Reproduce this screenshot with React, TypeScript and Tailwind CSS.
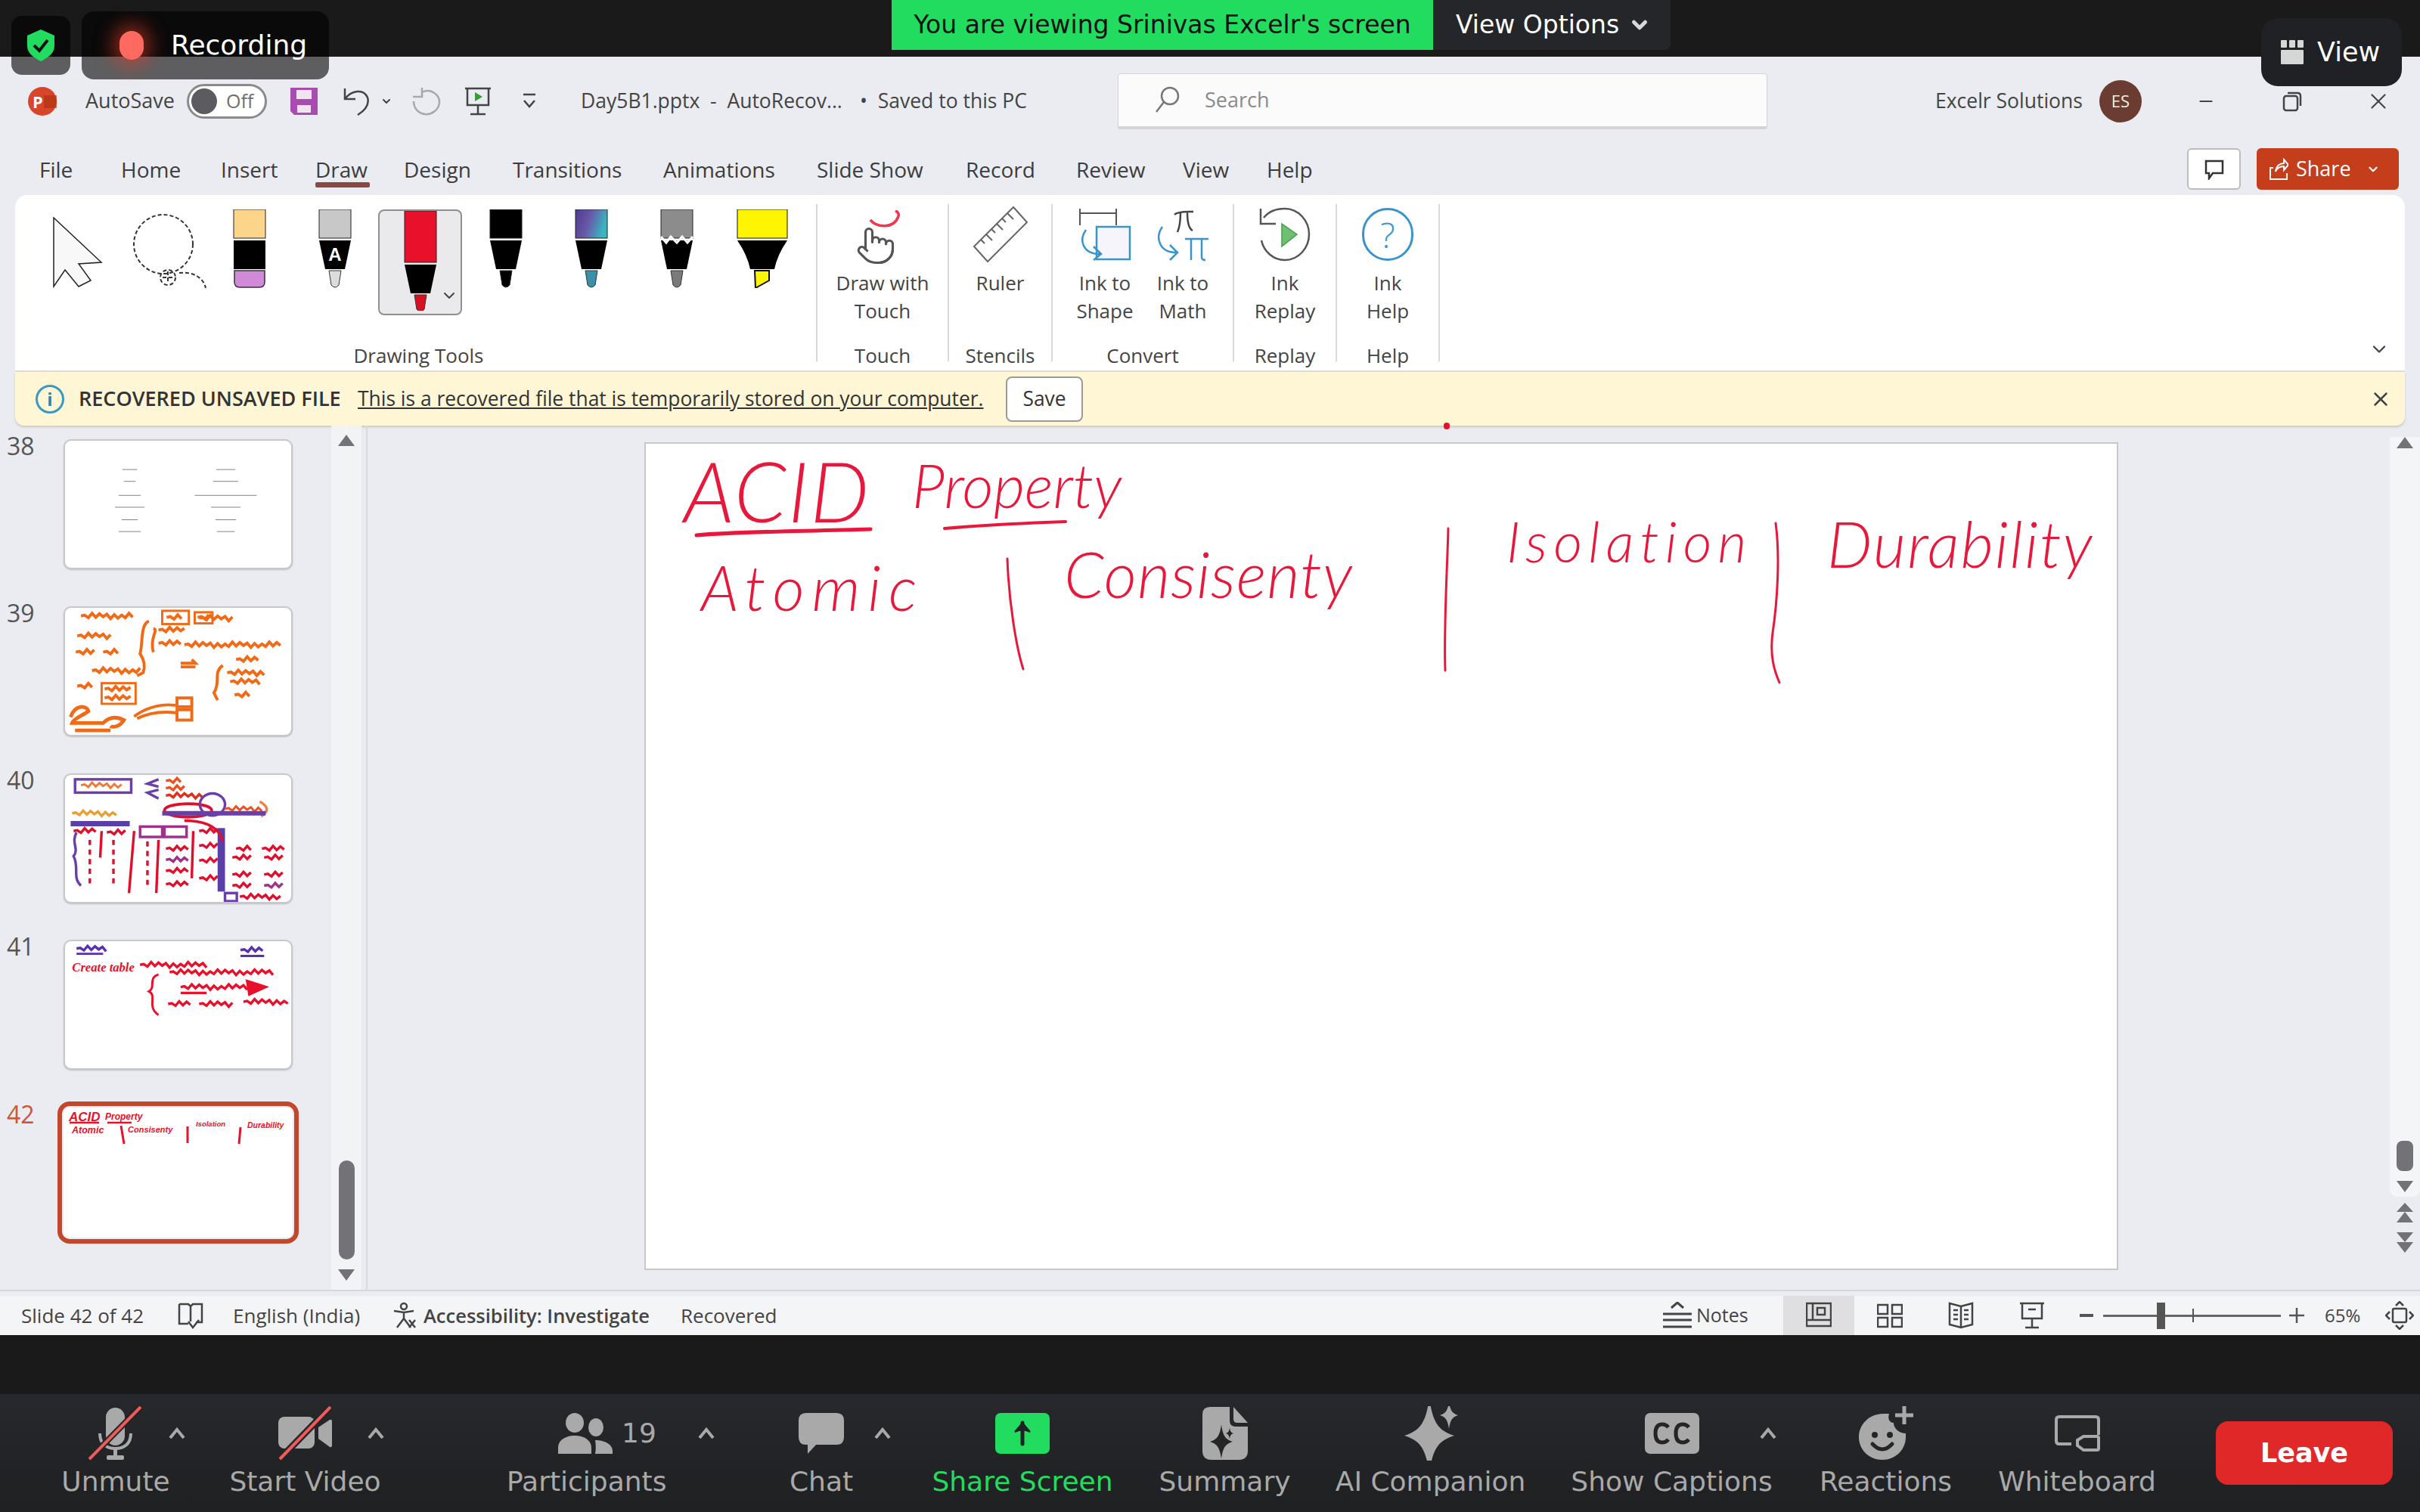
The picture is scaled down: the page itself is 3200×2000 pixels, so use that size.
import React from 'react';
import { Pointer, X, Minus, ChevronDown } from 'lucide-react';

const GRAY = '#a9a9a9';

const Caret = ({ className = '' }: { className?: string }) => (
  <svg width="24" height="16" viewBox="0 0 24 16" className={`shrink-0 ${className}`}>
    <path d="M3 14 L12 3 L21 14" fill="none" stroke={GRAY} strokeWidth="4" />
  </svg>
);

const MicIcon = () => (
  <svg width="72" height="72" viewBox="0 0 72 72">
    <rect x="23" y="2" width="25" height="50" rx="12.5" fill={GRAY} />
    <path d="M15 36 C15 50 24 56 35.5 56 S56 50 56 36" fill="none" stroke={GRAY} strokeWidth="4" />
    <rect x="33" y="56" width="5" height="10" fill={GRAY} />
    <rect x="24" y="65" width="23" height="6" rx="2" fill={GRAY} />
    <path d="M1 70 L69 1" stroke="#232527" strokeWidth="8" />
    <path d="M1 70 L69 1" stroke="#f05a5a" strokeWidth="4" />
  </svg>
);

const VideoIcon = () => (
  <svg width="72" height="72" viewBox="0 0 72 72">
    <rect x="0" y="14" width="48" height="42" rx="8" fill={GRAY} />
    <path d="M53 28 L68 18 Q71 17 71 20 V52 Q71 55 68 54 L53 43 Z" fill={GRAY} />
    <path d="M2 70 L69 1" stroke="#232527" strokeWidth="9" />
    <path d="M2 70 L69 1" stroke="#f05a5a" strokeWidth="4" />
  </svg>
);

const PeopleIcon = () => (
  <svg width="72" height="54" viewBox="0 0 72 54" className="shrink-0">
    <ellipse cx="22" cy="13" rx="12" ry="13" fill={GRAY} />
    <ellipse cx="50" cy="19" rx="10" ry="12" fill={GRAY} />
    <path d="M0 54 V46 C0 36 10 30 22 30 S44 36 44 46 V54 Z" fill={GRAY} />
    <path d="M49 36 C62 36 72 42 72 50 V54 H49 C50 48 50 42 49 36 Z" fill={GRAY} />
  </svg>
);

const ChatIcon = () => (
  <svg width="60" height="54" viewBox="0 0 60 54">
    <path d="M10 0 H50 Q60 0 60 10 V32 Q60 42 50 42 H23 L12 54 V42 H10 Q0 42 0 32 V10 Q0 0 10 0 Z" fill={GRAY} />
  </svg>
);

const ShareIcon = () => (
  <svg width="72" height="54" viewBox="0 0 72 54">
    <rect width="72" height="54" rx="7" fill="#22dc60" />
    <path d="M36 13 V41" stroke="#1f2124" strokeWidth="5" strokeLinecap="round" />
    <path d="M26 25 L36 13 L46 25 Q36 20 26 25 Z" fill="#1f2124" stroke="#1f2124" strokeWidth="2" />
  </svg>
);

const Sparkle = ({ cx, cy, r, fill }: { cx: number; cy: number; r: number; fill: string }) => (
  <path
    d={`M${cx} ${cy - r * 1.5} C${cx + r * 0.15} ${cy - r * 0.45} ${cx + r * 0.4} ${cy - r * 0.2} ${cx + r} ${cy} C${cx + r * 0.4} ${cy + r * 0.2} ${cx + r * 0.15} ${cy + r * 0.45} ${cx} ${cy + r * 1.5} C${cx - r * 0.15} ${cy + r * 0.45} ${cx - r * 0.4} ${cy + r * 0.2} ${cx - r} ${cy} C${cx - r * 0.4} ${cy - r * 0.2} ${cx - r * 0.15} ${cy - r * 0.45} ${cx} ${cy - r * 1.5} Z`}
    fill={fill}
  />
);

const SummaryIcon = () => (
  <svg width="60" height="70" viewBox="0 0 60 70">
    <path d="M10 0 H36 V18 Q36 26 44 26 H60 V58 Q60 70 48 70 H12 Q0 70 0 58 V10 Q0 0 10 0 Z" fill={GRAY} />
    <path d="M41 0 L60 21 H46 Q41 21 41 16 Z" fill={GRAY} />
    <Sparkle cx={25} cy={46} r={15} fill="#232527" />
    <Sparkle cx={36} cy={35} r={5} fill="#232527" />
  </svg>
);

const AiIcon = () => (
  <svg width="72" height="72" viewBox="0 0 72 72">
    <Sparkle cx={34} cy={39} r={33} fill={GRAY} />
    <Sparkle cx={60} cy={12} r={12} fill={GRAY} />
  </svg>
);

const CcIcon = () => (
  <svg width="72" height="54" viewBox="0 0 72 54">
    <rect width="72" height="54" rx="7" fill={GRAY} />
    <path d="M31 19 Q28 15 23 15 Q14 15 14 27 Q14 39 23 39 Q28 39 31 35" fill="none" stroke="#232527" strokeWidth="5" />
    <path d="M58 19 Q55 15 50 15 Q41 15 41 27 Q41 39 50 39 Q55 39 58 35" fill="none" stroke="#232527" strokeWidth="5" />
  </svg>
);

const ReactionIcon = () => (
  <svg width="72" height="72" viewBox="0 0 72 72">
    <path d="M32 10 C14 10 0 24 0 41 C0 58 14 71 31 71 C48 71 62 58 62 41 L62 36 C54 36 46 30 46 22 C40 22 38 16 40 10 Z" fill={GRAY} />
    <circle cx="21" cy="38" r="4" fill="#232527" />
    <circle cx="41" cy="38" r="4" fill="#232527" />
    <path d="M18 50 Q31 64 44 50" fill="none" stroke="#232527" strokeWidth="5" strokeLinecap="round" />
    <path d="M60 0 V24 M48 12 H72" stroke={GRAY} strokeWidth="5" />
  </svg>
);

const WhiteboardIcon = () => (
  <svg width="60" height="48" viewBox="0 0 60 48">
    <path d="M22 38 H6 Q2 38 2 34 V6 Q2 2 6 2 H54 Q58 2 58 6 V26" fill="none" stroke={GRAY} strokeWidth="4" />
    <path d="M30 33 L38 28 H56 Q58 28 58 30 V44 Q58 46 56 46 H38 L30 40 Z" fill="none" stroke={GRAY} strokeWidth="4" />
  </svg>
);

const ZoomItem = ({ label, icon, caret, className = '', green = false }: { label: string; icon: React.ReactNode; caret?: string; className?: string; green?: boolean }) => (
  <div className={`flex flex-col items-center ${className}`}>
    <div className="grid grid-cols-[minmax(0,1fr)_auto_minmax(0,1fr)] items-center w-full h-[72px]">
      <div />
      <div className="flex items-center justify-center">{icon}</div>
      {caret ? (
        <div className="w-0 flex items-center">
          <Caret className={caret} />
        </div>
      ) : (
        <div />
      )}
    </div>
    <span className={`mt-[8px] text-[36px] leading-[40px] whitespace-nowrap ${green ? 'text-[#22dc60]' : 'text-[#a9a9a9]'}`}>{label}</span>
  </div>
);

const Pen = ({ body, tip, kind = 'pen', long = false }: { body: string; tip: string; kind?: 'pen' | 'eraser' | 'pencil' | 'sketch'; long?: boolean }) => {
  const top = long ? 68 : 38;
  return (
    <svg width="44" height={long ? 132 : 104} viewBox={`0 0 44 ${long ? 132 : 104}`}>
      <rect x="1" y="0" width="42" height={top} fill={body} stroke="#222" strokeWidth="1" />
      {kind === 'eraser' ? (
        <>
          <rect x="1" y={top + 3} width="42" height="38" fill="#000" />
          <path d={`M2 ${top + 43} H42 V96 Q42 103 35 103 H9 Q2 103 2 96 Z`} fill={tip} stroke="#333" strokeWidth="1.5" />
        </>
      ) : (
        <>
          <path d={`M1 ${top + 3} H43 L35 ${top + 41} H9 Z`} fill="#000" />
          <path d={`M14 ${top + 43} H30 L27 ${top + 62} Q22 ${top + 68} 17 ${top + 62} Z`} fill={tip} stroke="#333" strokeWidth="1" />
        </>
      )}
      {kind === 'pencil' && (
        <text x="22" y="68" textAnchor="middle" fontSize="24" fontWeight="700" fill="#fff" fontFamily="Liberation Sans, sans-serif">A</text>
      )}
      {kind === 'sketch' && <path d="M1 36 L8 44 L14 36 L22 44 L29 36 L36 44 L43 36" fill="none" stroke="#fff" strokeWidth="3" />}
    </svg>
  );
};

const Highlighter = () => (
  <svg width="68" height="104" viewBox="0 0 68 104">
    <rect x="1" y="0" width="66" height="38" fill="#fff500" stroke="#111" strokeWidth="1" />
    <path d="M1 41 H67 Q54 60 50 79 H18 Q14 60 1 41 Z" fill="#000" />
    <path d="M24 81 H43 V94 L25 104 Z" fill="#fff500" stroke="#111" strokeWidth="2" />
  </svg>
);

const GalaxyDefs = () => (
  <svg width="0" height="0" className="absolute">
    <defs>
      <linearGradient id="galaxy" x1="0" y1="0" x2="1" y2="0.3">
        <stop offset="0" stopColor="#4b3a8f" />
        <stop offset="0.5" stopColor="#6a58a8" />
        <stop offset="1" stopColor="#37b6c0" />
      </linearGradient>
    </defs>
  </svg>
);

const RibbonBtn = ({ lines, icon, className = '' }: { lines: string[]; icon: React.ReactNode; className?: string }) => (
  <div className={`flex flex-col items-center ${className}`}>
    <div className="h-[72px] mt-[4px] flex items-center justify-center">{icon}</div>
    <div className="mt-[10px] text-[26px] leading-[37px] text-center text-[#444] whitespace-nowrap">
      {lines.map((l) => (
        <div key={l}>{l}</div>
      ))}
    </div>
  </div>
);

const Group = ({ label, className, labelClass = '', children }: { label: string; className: string; labelClass?: string; children: React.ReactNode }) => (
  <div className={`flex flex-col h-[208px] border-r-2 border-[#d8d8d8] ${className}`}>
    <div className="flex-1 flex">{children}</div>
    <div className={`text-[26px] leading-[16px] text-center text-[#444] whitespace-nowrap ${labelClass}`}>{label}</div>
  </div>
);

const ARrow = ({ up = false, className = '' }: { up?: boolean; className?: string }) => (
  <svg width="22" height="15" viewBox="0 0 22 15" className={className}>
    <path d={up ? 'M11 0 L22 15 H0 Z' : 'M0 0 H22 L11 15 Z'} fill="#737277" />
  </svg>
);

// wobbly stroke standing in for illegible marks on the small slide previews
const wave = (x1: number, x2: number, y: number, amp = 2.6, step = 5) => {
  let d = `M${x1} ${y}`;
  let i = 0;
  for (let x = x1 + step; x <= x2; x += step) {
    const a = amp * (0.4 + ((i * 7) % 5) / 4);
    d += ` L${x} ${y + (i % 2 ? a : -a)}`;
    i++;
  }
  return d;
};

const Thumb38 = () => {
  const rows: [number, number, number][] = [
    [39, 20, 26],
    [55, 16, 34],
    [74, 30, 84],
    [90, 40, 40],
    [107, 22, 28],
    [123, 30, 24],
  ];
  return (
    <svg viewBox="0 0 303 172" className="w-full h-full" stroke="#808080" strokeWidth="1">
      {rows.map(([y, l, r]) => (
        <g key={y}>
          <path d={`M${86 - l / 2} ${y} h${l}`} />
          <path d={`M${216 - r / 2} ${y} h${r}`} />
        </g>
      ))}
    </svg>
  );
};

const Thumb39 = () => {
  const waves: [number, number, number][] = [
    [20, 90, 11], [15, 64, 38], [50, 70, 60], [35, 100, 85], [125, 160, 30], [125, 155, 48], [160, 290, 50], [230, 262, 70], [218, 268, 88], [222, 262, 100], [228, 250, 118], [13, 40, 60], [15, 38, 106], [180, 225, 14], [136, 160, 13], [178, 196, 13], [52, 90, 110], [52, 90, 122],
  ];
  return (
    <svg viewBox="0 0 303 172" className="w-full h-full blur-[0.6px]" fill="none" stroke="#f26a16" strokeWidth="4">
      {waves.map(([a, b, y]) => (
        <path key={`${a}-${y}`} d={wave(a, b, y)} />
      ))}
      <rect x="130" y="4" width="36" height="18" strokeWidth="3" />
      <rect x="174" y="6" width="24" height="15" strokeWidth="3" />
      <rect x="48" y="102" width="46" height="28" strokeWidth="3" />
      <path d="M112 18 C100 22 104 50 100 62 C104 68 108 78 104 88 L96 92" />
      <path d="M118 28 C126 30 112 40 118 60" />
      <path d="M212 78 C198 88 210 100 200 115 L205 125" />
      <path d="M92 147 C110 134 130 130 148 132 M96 150 C112 142 130 140 148 142" />
      <rect x="150" y="122" width="20" height="12" />
      <rect x="150" y="138" width="20" height="14" />
      <path d="M6 148 C12 130 28 132 30 140 C22 146 10 150 8 156 H50 C60 146 70 148 78 152 C72 162 62 162 60 160" strokeWidth="5" />
      <path d="M12 166 H60" strokeWidth="5" />
      <path d="M155 75 H175 L170 70 M155 80 H175" />
    </svg>
  );
};

const Thumb40 = () => (
  <svg viewBox="0 0 303 172" className="w-full h-full blur-[0.6px]" fill="none" strokeWidth="3.5">
    <rect x="12" y="6" width="76" height="18" stroke="#6b3fa8" strokeWidth="3.5" />
    <path d={wave(20, 78, 14)} stroke="#f07a30" strokeWidth="3" />
    <path d="M125 6 L110 12 L125 16 M125 20 L110 24 L125 32" stroke="#6b3fa8" />
    <path d={wave(135, 155, 8)} stroke="#f05020" />
    <path d={wave(135, 160, 18)} stroke="#f05020" />
    <path d={wave(135, 185, 28)} stroke="#e0301c" />
    <ellipse cx="165" cy="48" rx="32" ry="9" stroke="#e0102c" strokeWidth="4" />
    <ellipse cx="198" cy="40" rx="17" ry="15" stroke="#6b3fa8" />
    <path d={wave(215, 265, 46)} stroke="#f05020" strokeWidth="3" />
    <path d="M262 36 Q280 46 264 56" stroke="#f08040" />
    <path d="M130 52 H270" stroke="#6b3fa8" strokeWidth="6" />
    <path d={wave(8, 72, 52)} stroke="#e8a030" />
    <path d="M6 66 H86" stroke="#5a3fa8" strokeWidth="7" />
    <rect x="100" y="70" width="30" height="14" stroke="#a0308c" />
    <rect x="133" y="70" width="30" height="14" stroke="#a0308c" />
    <path d={wave(10, 40, 76)} stroke="#e0102c" />
    <path d={wave(55, 80, 78)} stroke="#e0102c" />
    <path d="M14 78 C6 92 18 100 10 110 C18 125 8 140 20 150" stroke="#6b3fa8" />
    <path d="M32 88 V150" stroke="#e0102c" strokeDasharray="7 6" />
    <path d="M48 76 L46 112" stroke="#e0102c" />
    <path d="M64 88 V150" stroke="#e0102c" strokeDasharray="7 6" />
    <path d="M92 76 L85 160 M125 88 L122 160 M172 76 L170 140" stroke="#e0102c" strokeWidth="3.5" />
    <path d="M110 90 V155" stroke="#e0102c" strokeDasharray="7 6" />
    <path d={wave(135, 165, 100)} stroke="#e0102c" />
    <path d={wave(135, 165, 115)} stroke="#a0308c" />
    <path d={wave(135, 165, 130)} stroke="#e0102c" />
    <path d={wave(135, 165, 148)} stroke="#e0102c" />
    <path d={wave(180, 205, 76)} stroke="#e0102c" />
    <path d={wave(180, 205, 96)} stroke="#e0102c" />
    <path d={wave(180, 205, 116)} stroke="#e0102c" />
    <path d={wave(180, 205, 140)} stroke="#e0102c" />
    <path d="M210 72 V158" stroke="#5a3fa8" strokeWidth="10" />
    <path d="M160 62 Q205 62 212 90" stroke="#e0102c" />
    <path d={wave(230, 252, 100)} stroke="#e0102c" />
    <path d={wave(265, 296, 100)} stroke="#e0102c" />
    <path d={wave(225, 250, 112)} stroke="#e0102c" />
    <path d={wave(268, 296, 112)} stroke="#e0102c" />
    <path d={wave(225, 250, 135)} stroke="#e0102c" />
    <path d={wave(268, 296, 135)} stroke="#e0102c" />
    <path d={wave(225, 250, 150)} stroke="#e0102c" />
    <path d={wave(268, 296, 150)} stroke="#a0308c" />
    <path d={wave(235, 290, 165)} stroke="#e0102c" />
    <rect x="215" y="160" width="16" height="11" stroke="#6b3fa8" />
  </svg>
);

const Thumb41 = () => (
  <svg viewBox="0 0 303 172" className="w-full h-full" fill="none" strokeWidth="3.5">
    <g className="blur-[0.6px]">
      <path d={wave(14, 56, 10)} stroke="#5a30b0" />
      <path d={wave(236, 268, 12)} stroke="#5a30b0" />
      <path d="M236 20 H268 M14 17 H50" stroke="#5a30b0" strokeWidth="3" />
      <path d={wave(100, 190, 32)} stroke="#e8102a" />
      <path d={wave(140, 280, 42)} stroke="#e8102a" />
      <path d={wave(155, 245, 62)} stroke="#e8102a" />
      <path d="M155 70 H190" stroke="#e8102a" />
      <path d="M245 54 L270 62 L248 72 Z" fill="#e8102a" stroke="#e8102a" />
      <path d={wave(138, 168, 85)} stroke="#e8102a" />
      <path d={wave(180, 228, 85)} stroke="#e8102a" />
      <path d={wave(240, 302, 82)} stroke="#e8102a" />
      <path d="M125 45 C110 50 122 62 112 68 C124 74 108 88 125 100" stroke="#e8102a" strokeWidth="3" />
    </g>
    <text x="8" y="41" fontSize="17" fontWeight="700" fill="#e8102a" stroke="none" fontFamily="Liberation Serif, serif" fontStyle="italic">Create table</text>
  </svg>
);

const Thumb42 = () => (
  <svg viewBox="0 0 303 172" className="w-full h-full" fill="none" stroke="#e8102a" strokeWidth="2.5">
    <g stroke="none" fill="#e8102a" fontFamily="Liberation Sans, sans-serif" fontWeight="700" fontStyle="italic">
      <text x="7" y="18" fontSize="17">ACID</text>
      <text x="55" y="16" fontSize="12">Property</text>
      <text x="11" y="34" fontSize="12.5">Atomic</text>
      <text x="85" y="33" fontSize="11">Consisenty</text>
      <text x="175" y="25" fontSize="9.5">Isolation</text>
      <text x="243" y="27" fontSize="10.5">Durability</text>
    </g>
    <path d="M8 20 H47 M58 20 H90" />
    <path d="M76 24 L80 48 M164 25 V47 M234 26 L232 48" strokeWidth="3" />
  </svg>
);

const thumbs: { n: number; content: React.ReactNode; mb: string }[] = [
  { n: 38, content: <Thumb38 />, mb: 'mb-[49px]' },
  { n: 39, content: <Thumb39 />, mb: 'mb-[49px]' },
  { n: 40, content: <Thumb40 />, mb: 'mb-[48px]' },
  { n: 41, content: <Thumb41 />, mb: 'mb-[50px]' },
];

const tabs: { t: string; w: string }[] = [
  { t: 'File', w: 'w-[108px]' },
  { t: 'Home', w: 'w-[132px]' },
  { t: 'Insert', w: 'w-[125px]' },
  { t: 'Draw', w: 'w-[117px]' },
  { t: 'Design', w: 'w-[144px]' },
  { t: 'Transitions', w: 'w-[199px]' },
  { t: 'Animations', w: 'w-[203px]' },
  { t: 'Slide Show', w: 'w-[197px]' },
  { t: 'Record', w: 'w-[146px]' },
  { t: 'Review', w: 'w-[141px]' },
  { t: 'View', w: 'w-[111px]' },
  { t: 'Help', w: 'w-[80px]' },
];

const StatusIcon = ({ children, className = '' }: { children: React.ReactNode; className?: string }) => (
  <svg width="34" height="36" viewBox="0 0 34 36" fill="none" stroke="#444" strokeWidth="2.5" className={className}>
    {children}
  </svg>
);

export default function App() {
  return (
    <div className="relative w-[3200px] h-[2000px] overflow-hidden flex flex-col bg-[#1a1a1a] font-['Open_Sans',sans-serif]">
      <GalaxyDefs />

      {/* zoom top bar */}
      <div className="h-[75px] shrink-0 pl-[1179px] font-['DejaVu_Sans',sans-serif]">
        <div className="flex h-[66px]">
          <div className="w-[716px] bg-[#22dc60] flex items-center justify-center text-[33px] text-[#111] whitespace-nowrap">You are viewing Srinivas Excelr's screen</div>
          <div className="w-[314px] bg-[#24262a] rounded-br-[8px] flex items-center pl-[30px] gap-[12px] text-[33px] text-white whitespace-nowrap">
            View Options
            <ChevronDown size={30} strokeWidth={4} className="text-[#d8d8d8]" />
          </div>
        </div>
      </div>

      {/* powerpoint window */}
      <div className="h-[1691px] shrink-0 flex flex-col bg-[#eaecf1]">
        <div className="h-[114px] pt-[3px] shrink-0 flex items-center text-[#444] text-[26.5px] whitespace-nowrap">
          <div className="relative ml-[37px] w-[38px] h-[38px] rounded-full bg-[#d8452a] flex items-center pl-[6px] text-[22px] font-bold text-white leading-none">
            P
            <div className="absolute right-0 top-[11px] w-[17px] h-[17px] bg-[#a8300f]/60" />
          </div>
          <span className="ml-[38px] w-[118px] text-[27px]">AutoSave</span>
          <div className="ml-[16px] w-[106px] h-[46px] rounded-full border-[3px] border-[#8a8a8a] bg-white flex items-center pl-[3px]">
            <div className="w-[34px] h-[34px] rounded-full bg-[#5c5c60]" />
            <span className="ml-[12px] text-[25px] text-[#707070]">Off</span>
          </div>
          <svg width="38" height="38" viewBox="0 0 38 38" className="ml-[30px]">
            <path d="M1 1 H37 V37 H6 L1 32 Z" fill="#a94cb0" />
            <rect x="9" y="4" width="20" height="12" fill="#f0e4f1" />
            <rect x="10" y="24" width="18" height="10" fill="#f0e4f1" />
          </svg>
          <svg width="38" height="38" viewBox="0 0 38 38" fill="none" stroke="#444" strokeWidth="2.5" className="ml-[32px]">
            <path d="M3 2 V16 H17 M3 16 C12 4 28 2 33 14 C36 24 28 32 20 37" />
          </svg>
          <ChevronDown size={16} strokeWidth={3} className="ml-[12px] text-[#444]" />
          <svg width="40" height="40" viewBox="0 0 40 40" fill="none" stroke="#a8a8a8" strokeWidth="2.5" className="ml-[25px]">
            <path d="M14 2 V14 H2 M14 8 C26 2 38 12 37 22 C36 32 26 38 18 37 C8 36 3 28 3 20" />
          </svg>
          <svg width="36" height="38" viewBox="0 0 36 38" fill="none" stroke="#444" strokeWidth="2.5" className="ml-[30px]">
            <path d="M1 2 H35 M4 2 V24 H32 V2 M18 24 V35 M8 36 H28" />
            <path d="M14 7 L24 13 L14 19 Z" fill="#3a9a3a" stroke="none" />
          </svg>
          <svg width="16" height="24" viewBox="0 0 16 24" fill="none" stroke="#444" strokeWidth="2.5" className="ml-[42px]">
            <path d="M0 3 H16 M1 11 L8 19 L15 11" />
          </svg>
          <span className="ml-[60px] w-[369px] whitespace-pre">Day5B1.pptx  -  AutoRecov...</span>
          <span className="w-[223px] whitespace-pre">•  Saved to this PC</span>
          <div className="ml-[118px] w-[859px] h-[74px] bg-[#fbfbfb] border border-[#d4d4d8] border-b-[4px] rounded-[4px] flex items-center pl-[48px] text-[#8a8a8a]">
            <svg width="34" height="36" viewBox="0 0 34 36" fill="none" stroke="#777" strokeWidth="2.5">
              <circle cx="20" cy="13" r="11" />
              <path d="M12 21 L2 34" />
            </svg>
            <span className="ml-[32px] text-[27px]">Search</span>
          </div>
          <span className="ml-[222px] w-[196px]">Excelr Solutions</span>
          <div className="ml-[21px] w-[56px] h-[56px] rounded-full bg-[#6b3d32] flex items-center justify-center text-[22px] text-[#eed]">ES</div>
          <Minus size={26} strokeWidth={2} className="ml-[72px]" />
          <svg width="26" height="28" viewBox="0 0 26 28" fill="none" stroke="#444" strokeWidth="2.5" className="ml-[88px]">
            <rect x="2" y="7" width="18" height="19" rx="3" />
            <path d="M7 3 H20 Q24 3 24 7 V20" />
          </svg>
          <X size={34} strokeWidth={1.5} className="ml-[84px]" />
        </div>

        <div className="h-[69px] shrink-0 flex items-center pl-[52px] text-[28px] text-[#3c3c3c]">
          {tabs.map(({ t, w }) => (
            <div key={t} className={`relative ${w} whitespace-nowrap`}>
              {t}
              {t === 'Draw' && <div className="absolute left-0 top-[38px] w-[72px] h-[7px] bg-[#8a4a44] rounded-[2px]" />}
            </div>
          ))}
          <div className="ml-[1137px] w-[71px] h-[55px] bg-white border-2 border-[#bdbdbd] rounded-[6px] flex items-center justify-center">
            <svg width="26" height="28" viewBox="0 0 26 28" fill="none" stroke="#333" strokeWidth="2.5">
              <path d="M2 3 H24 V19 H11 L6 26 V19 H2 Z" />
            </svg>
          </div>
          <div className="ml-[21px] w-[188px] h-[55px] bg-[#c43e1c] rounded-[6px] flex items-center pl-[16px] text-[27px] text-white">
            <svg width="26" height="30" viewBox="0 0 26 30" fill="none" stroke="#fff" strokeWidth="2">
              <path d="M6 13 H2 V28 H24 V20 M9 18 C10 10 15 7 20 7 V2 L26 9 L20 16 V11 C15 11 11 13 9 18 Z" />
            </svg>
            <span className="ml-[10px]">Share</span>
            <ChevronDown size={18} strokeWidth={3} className="ml-[20px]" />
          </div>
        </div>

        {/* ribbon */}
        <div className="relative mx-[20px] h-[234px] shrink-0 bg-white rounded-t-[16px] flex pt-[12px] border-b-2 border-[#dcdcdc]">
          <Group label="Drawing Tools" className="w-[1061px]" labelClass="pl-[8px]">
            <div className="flex items-start pl-[50px] pt-[7px]">
              <svg width="66" height="94" viewBox="0 0 66 94" className="mt-[10px]">
                <path d="M1 1 V92 L16 70 L34 92 L50 84 L34 62 L64 60 Z" fill="#f8f8f8" stroke="#222" strokeWidth="1.5" />
              </svg>
              <svg width="98" height="100" viewBox="0 0 98 100" fill="none" stroke="#333" strokeWidth="2" strokeDasharray="5 3" className="ml-[39px] mt-[6px]">
                <ellipse cx="41" cy="40" rx="39" ry="39" />
                <circle cx="47" cy="84" r="10" />
                <path d="M62 78 C80 76 94 84 97 98 M40 84 H56 M47 76 V92" />
              </svg>
              <div className="w-[113px] flex justify-center"><Pen body="#fbd68a" tip="#d08ad8" kind="eraser" /></div>
              <div className="w-[113px] flex justify-center"><Pen body="#c8c8c8" tip="#dcdcdc" kind="pencil" /></div>
              <div className="relative w-[113px] flex justify-center">
                <div className="w-[111px] h-[140px] bg-[#eaeaec] border-2 border-[#8f8f8f] rounded-[8px] flex justify-center">
                  <Pen body="#e8102a" tip="#d81020" long />
                </div>
                <ChevronDown size={24} strokeWidth={2} className="absolute right-[6px] bottom-[14px] text-[#444]" />
              </div>
              <div className="w-[113px] flex justify-center"><Pen body="#000" tip="#000" /></div>
              <div className="w-[113px] flex justify-center"><Pen body="url(#galaxy)" tip="#3a90a8" /></div>
              <div className="w-[113px] flex justify-center"><Pen body="#8c8c8c" tip="#7a7a7a" kind="sketch" /></div>
              <div className="w-[113px] flex justify-center"><Highlighter /></div>
            </div>
          </Group>
          <Group label="Touch" className="w-[174px]">
            <RibbonBtn
              className="w-full"
              lines={['Draw with', 'Touch']}
              icon={
                <div className="relative w-[60px] h-[72px]">
                  <svg width="44" height="24" viewBox="0 0 48 26" fill="none" stroke="#ea3a4e" strokeWidth="4" className="absolute left-[12px] top-[4px]">
                    <path d="M2 14 C12 26 36 26 42 10 C44 6 42 2 38 1" />
                  </svg>
                  <Pointer size={54} strokeWidth={1.4} className="absolute left-[-6px] top-[24px] text-[#555]" />
                </div>
              }
            />
          </Group>
          <Group label="Stencils" className="w-[137px]">
            <RibbonBtn
              className="w-full"
              lines={['Ruler']}
              icon={
                <svg width="74" height="76" viewBox="0 0 74 76" fill="none" stroke="#666" strokeWidth="2">
                  <path d="M54 2 L72 22 L20 74 L2 54 Z" />
                  <path d="M46 10 L54 18 M39 17 L44 22 M32 24 L40 32 M25 31 L30 36 M18 38 L26 46 M11 45 L16 50" />
                </svg>
              }
            />
          </Group>
          <Group label="Convert" className="w-[240px]">
            <RibbonBtn
              className="w-[122px] ml-[8px]"
              lines={['Ink to', 'Shape']}
              icon={
                <svg width="70" height="72" viewBox="0 0 70 72" fill="none">
                  <path d="M2 2 V24 M2 8 H50 M50 2 V24" stroke="#555" strokeWidth="2" />
                  <rect x="24" y="26" width="44" height="43" fill="#f5f5fb" stroke="#3a94cc" strokeWidth="2.5" />
                  <path d="M10 30 C0 44 6 62 28 62 M20 52 L30 62 L20 70" stroke="#3a94cc" strokeWidth="2.5" />
                </svg>
              }
            />
            <RibbonBtn
              className="w-[84px]"
              lines={['Ink to', 'Math']}
              icon={
                <svg width="70" height="72" viewBox="0 0 70 72" fill="none" strokeWidth="2.5">
                  <path d="M24 10 C28 5 42 6 49 6 M32 7 C32 18 31 26 28 33 M41 7 C41 18 42 28 48 31" stroke="#444" />
                  <path d="M38 42 H69 M46 42 V70 M60 42 V66 Q60 70 65 70" stroke="#3a94cc" />
                  <path d="M8 26 C-2 40 4 60 26 60 M18 50 L28 60 L18 70" stroke="#3a94cc" />
                </svg>
              }
            />
          </Group>
          <Group label="Replay" className="w-[136px]">
            <RibbonBtn
              className="w-full"
              lines={['Ink', 'Replay']}
              icon={
                <svg width="68" height="72" viewBox="0 0 68 72" fill="none" stroke="#555" strokeWidth="2.5">
                  <path d="M6 14 C14 4 24 2 34 2 C52 2 66 18 66 36 C66 54 52 70 34 70 C18 70 6 58 3 44" />
                  <path d="M2 2 V22 H22" />
                  <path d="M30 22 L50 36 L30 52 Z" fill="#6cc070" stroke="#4a9a4e" strokeWidth="1.5" />
                </svg>
              }
            />
          </Group>
          <Group label="Help" className="w-[136px]">
            <RibbonBtn
              className="w-full"
              lines={['Ink', 'Help']}
              icon={
                <div className="w-[68px] h-[70px] rounded-full border-[3px] border-[#3a94cc] flex items-center justify-center text-[46px] leading-none text-[#3a94cc] font-light">?</div>
              }
            />
          </Group>
          <ChevronDown size={28} strokeWidth={2} className="absolute right-[20px] bottom-[14px] text-[#444]" />
        </div>

        {/* recovered banner */}
        <div className="mx-[20px] h-[71px] shrink-0 bg-[#fef6d5] rounded-b-[12px] flex items-center text-[26.4px] text-[#333] shadow-[0_2px_3px_#c8c8c8] whitespace-nowrap">
          <div className="ml-[27px] w-[38px] h-[38px] rounded-full border-[3px] border-[#3a9ac4] flex items-center justify-center text-[24px] font-bold text-[#2a86b0] leading-none">i</div>
          <span className="ml-[19px] w-[369px] text-[27px] font-semibold">RECOVERED UNSAVED FILE</span>
          <span className="w-[857px] underline">This is a recovered file that is temporarily stored on your computer.</span>
          <div className="w-[102px] h-[60px] bg-white border-2 border-[#9a9a9a] rounded-[8px] flex items-center justify-center">Save</div>
          <X size={30} strokeWidth={2} className="ml-auto mr-[17px] text-[#444]" />
        </div>

        {/* workspace */}
        <div className="relative flex-1 flex min-h-0 border-b-2 border-[#d4d6da]">
          <div className="absolute left-[1909px] top-[-4px] w-[8px] h-[9px] rounded-full bg-[#e8102a]" />

          <div className="w-[486px] shrink-0 flex border-r-2 border-[#d8dade]">
            <div className="w-[438px] pt-[18px] text-[32px] leading-none text-[#555]">
              {thumbs.map(({ n, content, mb }) => (
                <div key={n} className={`flex h-[172px] ${mb}`}>
                  <span className="w-[84px] pl-[9px] -mt-[7px]">{n}</span>
                  <div className="w-[303px] h-[172px] bg-white border-2 border-[#c8c8cc] rounded-[10px] overflow-hidden shadow-[0_1px_2px_#bbb]">{content}</div>
                </div>
              ))}
              <div className="flex h-[172px]">
                <span className="w-[84px] pl-[9px] -mt-[7px] text-[#c9573a]">42</span>
                <div className="w-[303px] h-[172px] bg-white rounded-[8px] outline-[6px] outline-offset-[2px] outline-[#c3482b] overflow-hidden">
                  <Thumb42 />
                </div>
              </div>
            </div>
            <div className="w-[40px] flex flex-col items-center bg-[#f2f3f5] pt-[12px] pb-[12px]">
              <ARrow up />
              <div className="flex-1" />
              <div className="w-[21px] h-[131px] rounded-full bg-[#737277]" />
              <ARrow className="mt-[13px]" />
            </div>
          </div>

          <div className="flex-1 min-w-0 pl-[366px] pt-[22px]">
            <div className="relative w-[1949px] h-[1095px] bg-white border-2 border-[#c8c8cc] text-[#e8183c] italic font-['Lato',sans-serif] font-light leading-none whitespace-nowrap">
              <span className="absolute left-[50px] top-[6px] text-[110px] tracking-[2px]">ACID</span>
              <span className="absolute left-[352px] top-[14px] text-[80px]">Property</span>
              <span className="absolute left-[73px] top-[148px] text-[82px] tracking-[10px]">Atomic</span>
              <span className="absolute left-[553px] top-[130px] text-[84px] tracking-[1px]">Consisenty</span>
              <span className="absolute left-[1138px] top-[92px] text-[74px] tracking-[8px]">Isolation</span>
              <span className="absolute left-[1562px] top-[90px] text-[84px] tracking-[2px]">Durability</span>
              <svg width="1947" height="1095" viewBox="0 0 1947 1095" fill="none" stroke="#e8183c" strokeLinecap="round" className="absolute left-0 top-0">
                <path d="M67 121 C120 116 200 116 297 113" strokeWidth="5" />
                <path d="M395 112 C440 108 500 105 555 103" strokeWidth="4" />
                <path d="M478 152 C480 210 490 270 499 298" strokeWidth="3" />
                <path d="M1061 112 C1060 160 1055 240 1057 300" strokeWidth="3" />
                <path d="M1494 105 C1500 150 1496 210 1490 250 C1486 280 1492 300 1499 316" strokeWidth="3" />
              </svg>
            </div>
          </div>

          <div className="w-[40px] shrink-0 flex flex-col items-center pt-[15px]">
            <div className="w-full flex-1 flex flex-col items-center bg-[#f4f5f7] rounded-b-[10px] pb-[6px] max-h-[1005px]">
              <ARrow up />
              <div className="flex-1" />
              <div className="w-[22px] h-[40px] rounded-[8px] bg-[#737277]" />
              <ARrow className="mt-[13px]" />
            </div>
            <svg width="22" height="66" viewBox="0 0 22 66" fill="#737277" className="mt-[8px]">
              <path d="M11 0 L22 12 H0 Z M11 12 L22 26 H0 Z M0 39 H22 L11 52 Z M0 52 H22 L11 66 Z" />
            </svg>
          </div>
        </div>

        {/* status bar */}
        <div className="h-[52px] mt-[6px] shrink-0 bg-[#f4f5f7] flex items-center text-[26px] text-[#444] whitespace-nowrap">
          <span className="ml-[28px] w-[207px]">Slide 42 of 42</span>
          <StatusIcon>
            <path d="M2 3 H14 L17 6 L20 3 H32 V27 H24 M2 3 V29 H14 M17 6 V26 M14 26 L20 34 L28 24" />
          </StatusIcon>
          <span className="ml-[39px] w-[209px]">English (India)</span>
          <StatusIcon>
            <circle cx="17" cy="6" r="4" />
            <path d="M4 12 L17 14 L30 12 M17 14 V22 M17 22 L8 34 M17 22 L26 34 M24 24 L32 34 M32 24 L24 34" />
          </StatusIcon>
          <span className="ml-[9px] w-[340px] text-[25.5px] font-semibold">Accessibility: Investigate</span>
          <span className="w-[128px]">Recovered</span>
          <svg width="40" height="36" viewBox="0 0 40 36" fill="none" stroke="#444" strokeWidth="3" className="ml-[1170px]">
            <path d="M12 8 L20 1 L28 8 M1 16 H39 M1 24 H39 M1 33 H39" />
          </svg>
          <span className="ml-[5px] w-[115px] text-[25px]">Notes</span>
          <div className="w-[94px] h-[52px] bg-[#dfdfe1] flex items-center justify-center">
            <StatusIcon>
              <rect x="1" y="2" width="32" height="30" />
              <path d="M1 24 H33 M9 2 V24" />
              <rect x="15" y="8" width="10" height="9" />
            </StatusIcon>
          </div>
          <StatusIcon className="ml-[30px]">
            <rect x="1" y="4" width="13" height="12" />
            <rect x="20" y="4" width="13" height="12" />
            <rect x="1" y="21" width="13" height="12" />
            <rect x="20" y="21" width="13" height="12" />
          </StatusIcon>
          <StatusIcon className="ml-[60px]">
            <path d="M2 2 L17 6 L32 2 V30 L17 34 L2 30 Z M17 6 V34 M7 11 H13 M7 17 H13 M7 23 H13 M21 11 H27 M21 17 H27 M21 23 H27" />
          </StatusIcon>
          <StatusIcon className="ml-[60px]">
            <path d="M1 2 H33 M4 2 V22 H30 V2 M17 22 V34 M8 34 H26 M12 10 H22" />
          </StatusIcon>
          <div className="ml-[46px] w-[18px] h-[4px] bg-[#555]" />
          <div className="relative ml-[13px] w-[235px] h-[3px] bg-[#666]">
            <div className="absolute left-[71px] -top-[16px] w-[11px] h-[35px] bg-[#555]" />
            <div className="absolute left-[118px] -top-[8px] w-[2px] h-[18px] bg-[#555]" />
          </div>
          <svg width="20" height="20" viewBox="0 0 20 20" stroke="#555" strokeWidth="2.5" className="ml-[11px]">
            <path d="M0 10 H20 M10 0 V20" />
          </svg>
          <span className="ml-[27px] w-[50px] text-[24px]">65%</span>
          <svg width="38" height="38" viewBox="0 0 38 38" fill="none" stroke="#444" strokeWidth="2.5" className="ml-[30px]">
            <rect x="10" y="10" width="18" height="18" rx="2" />
            <path d="M14 6 L19 1 L24 6 M14 32 L19 37 L24 32 M6 14 L1 19 L6 24 M32 14 L37 19 L32 24" />
          </svg>
        </div>
      </div>

      {/* gap between the shared screen and the meeting toolbar */}
      <div className="h-[78px] shrink-0 bg-[#1a1a1a]" />

      {/* zoom toolbar */}
      <div className="flex-1 flex items-start pt-[16px] bg-linear-to-b from-[#26282b] to-[#1f2022] font-['DejaVu_Sans',sans-serif]">
        <ZoomItem className="ml-[83px] w-[140px]" label="Unmute" icon={<MicIcon />} caret="ml-[33px]" />
        <ZoomItem className="ml-[77px] w-[207px]" label="Start Video" icon={<VideoIcon />} caret="ml-[45px]" />
        <div className="ml-[163px] w-[210px] flex flex-col">
          <div className="h-[72px] flex items-center pl-[68px] text-[#a9a9a9]">
            <PeopleIcon />
            <span className="ml-[12px] text-[36px] leading-none">19</span>
            <Caret className="ml-[54px]" />
          </div>
          <span className="mt-[8px] text-[36px] leading-[40px] text-[#a9a9a9] whitespace-nowrap">Participants</span>
        </div>
        <ZoomItem className="ml-[164px] w-[84px]" label="Chat" icon={<ChatIcon />} caret="ml-[39px]" />
        <ZoomItem className="ml-[106px] w-[236px]" label="Share Screen" icon={<ShareIcon />} green />
        <ZoomItem className="ml-[64px] w-[171px]" label="Summary" icon={<SummaryIcon />} />
        <ZoomItem className="ml-[62px] w-[249px]" label="AI Companion" icon={<AiIcon />} />
        <ZoomItem className="ml-[62px] w-[265px]" label="Show Captions" icon={<CcIcon />} caret="ml-[79px]" />
        <ZoomItem className="ml-[65px] w-[171px]" label="Reactions" icon={<ReactionIcon />} />
        <ZoomItem className="ml-[64px] w-[207px]" label="Whiteboard" icon={<WhiteboardIcon />} />
        <div className="ml-auto mr-[36px] mt-[20px] w-[234px] h-[84px] shrink-0 rounded-[16px] bg-[#e02828] flex items-center justify-center text-[35px] font-bold text-white">Leave</div>
      </div>

      {/* meeting pills that float over the shared screen */}
      <div className="absolute left-[15px] top-[21px] w-[78px] h-[78px] rounded-[14px] bg-black/60 flex items-center justify-center">
        <svg width="40" height="42" viewBox="0 0 40 42">
          <path d="M20 0 L38 8 V22 C38 32 28 38 20 42 C12 38 2 32 2 22 V8 Z" fill="#22dc60" />
          <path d="M11 21 L18 28 L29 14" fill="none" stroke="#111" strokeWidth="4" />
        </svg>
      </div>
      <div className="absolute left-[108px] top-[15px] w-[327px] h-[90px] rounded-[16px] bg-black/60 flex items-center font-['DejaVu_Sans',sans-serif] text-[36px] text-white">
        <div className="ml-[50px] w-[32px] h-[38px] rounded-full bg-[#ff6a60] shadow-[0_0_22px_10px_rgba(230,60,40,0.5)]" />
        <span className="ml-[36px]">Recording</span>
      </div>
      <div className="absolute left-[2990px] top-[24px] w-[186px] h-[90px] rounded-[22px] bg-[#202124] flex items-center pl-[26px] font-['DejaVu_Sans',sans-serif] text-[35px] text-white">
        <svg width="30" height="32" viewBox="0 0 30 32" fill="#d6d6d6">
          <rect x="0" y="0" width="8" height="10" rx="1" />
          <rect x="11" y="0" width="8" height="10" rx="1" />
          <rect x="22" y="0" width="8" height="10" rx="1" />
          <rect x="0" y="13" width="30" height="19" rx="1" />
        </svg>
        <span className="ml-[18px]">View</span>
      </div>
    </div>
  );
}
